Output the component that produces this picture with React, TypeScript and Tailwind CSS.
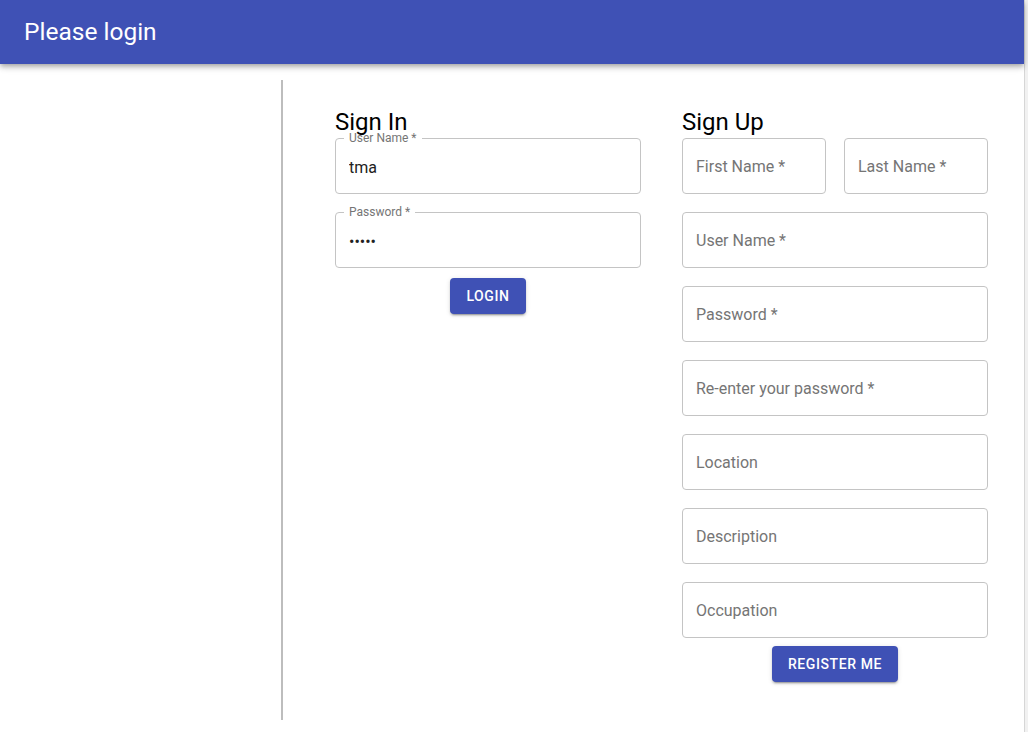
import React from 'react';

const font = { fontFamily: 'Roboto, "Liberation Sans", sans-serif' };

const Field = ({ label, value, type = 'text' }: { label: string; value?: string; type?: string }) => {
  if (value) {
    return (
      <div className="relative h-[56px] rounded-[4px] border border-[#c4c4c4]">
        <span className="absolute -top-[8px] left-[8px] bg-white px-[5px] text-[12px] leading-[14px] text-[#757575]">
          {label} *
        </span>
        <input
          readOnly
          type={type}
          value={value}
          className="h-full w-full rounded-[4px] bg-transparent px-[13px] pt-[2px] text-[16px] text-[#212121] outline-none"
        />
      </div>
    );
  }
  return (
    <div className="flex h-[56px] items-center rounded-[4px] border border-[#c4c4c4] px-[13px] pt-[2px]">
      <span className="text-[16px] text-[#757575]">{label}</span>
    </div>
  );
};

const Button = ({ children }: { children: React.ReactNode }) => (
  <button
    type="button"
    className="h-[36px] rounded-[4px] bg-[#3f51b5] px-[16px] text-[14px] font-medium uppercase tracking-[0.6px] text-white shadow-[0_3px_1px_-2px_rgba(0,0,0,0.2),0_2px_2px_0_rgba(0,0,0,0.14),0_1px_5px_0_rgba(0,0,0,0.12)]"
  >
    {children}
  </button>
);

export default function App() {
  return (
    <div className="flex h-[732px] w-[1028px] bg-white" style={font}>
      <div className="flex w-[1024px] flex-col">
        <header className="relative z-10 flex h-[64px] items-center bg-[#3f51b5] px-[24px] shadow-[0_2px_4px_-1px_rgba(0,0,0,0.2),0_4px_5px_0_rgba(0,0,0,0.14),0_1px_10px_0_rgba(0,0,0,0.12)]">
          <h1 className="text-[24.5px] font-normal text-white">Please login</h1>
        </header>
        <div className="flex flex-1 pt-[16px] pb-[12px]">
          <div className="w-[283px] border-r-2 border-[#bdbdbd]" />
          <div className="flex gap-[41px] pl-[52px]">
            <section className="w-[306px]">
              <h2 className="relative z-10 mt-[26px] h-[32px] text-[24px] leading-[32px] text-black">Sign In</h2>
              <div className="flex flex-col gap-[18px]">
                <Field label="User Name" value="tma" />
                <Field label="Password" value="12345" type="password" />
              </div>
              <div className="mt-[10px] flex justify-center">
                <Button>Login</Button>
              </div>
            </section>
            <section className="w-[306px]">
              <h2 className="relative z-10 mt-[26px] h-[32px] text-[24px] leading-[32px] text-black">Sign Up</h2>
              <div className="flex flex-col gap-[18px]">
                <div className="grid grid-cols-2 gap-[18px]">
                  <Field label="First Name *" />
                  <Field label="Last Name *" />
                </div>
                <Field label="User Name *" />
                <Field label="Password *" />
                <Field label="Re-enter your password *" />
                <Field label="Location" />
                <Field label="Description" />
                <Field label="Occupation" />
              </div>
              <div className="mt-[8px] flex justify-center">
                <Button>Register me</Button>
              </div>
            </section>
          </div>
        </div>
      </div>
      <div className="w-[4px] border-l border-[#d6d6d6] bg-[#f1f1f1]" />
    </div>
  );
}
